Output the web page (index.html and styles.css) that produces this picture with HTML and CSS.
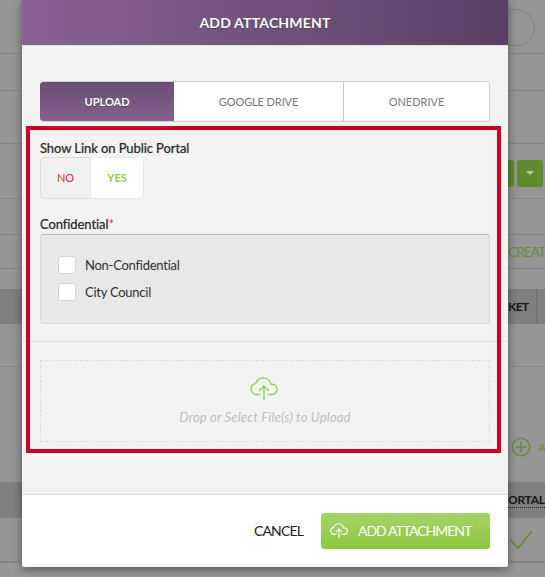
FILE: index.html
```html
<!DOCTYPE html>
<html lang="en">
<head>
<meta charset="utf-8">
<title>Add Attachment</title>
<link rel="stylesheet" href="styles.css">
</head>
<body>
<div class="page">
  <div class="bg-row bg-row-top"><span class="bg-pill"></span></div>
  <div class="bg-row bg-row-a"></div>
  <div class="bg-row bg-row-b"></div>
  <div class="bg-row bg-row-c"><span class="bg-btn"></span><span class="bg-btn bg-btn-caret"><i class="caret"></i></span><span class="bg-btn"></span></div>
  <div class="bg-row bg-row-d"></div>
  <div class="bg-row bg-row-e"><span class="bg-link">CREAT</span></div>
  <div class="bg-row bg-row-f"></div>
  <div class="bg-band bg-band-ket"><span class="bg-head">KET</span><span class="bg-head-rest"></span></div>
  <div class="bg-row bg-row-g"></div>
  <div class="bg-row bg-row-h">
    <svg class="bg-plus" viewBox="0 0 20 20" width="20" height="20"><circle cx="10" cy="10" r="8.8"/><path d="M10 4.5v11M4.500 10h11"/></svg>
    <span class="bg-link bg-link-a">A</span>
  </div>
  <div class="bg-band bg-band-portal"><span class="bg-head bg-head-dotted">ORTAL</span></div>
  <div class="bg-row bg-row-i">
    <svg class="bg-check" viewBox="0 0 24 20" width="24" height="20"><path d="M1.500 9.500l7.500 8.500L22.500 1.500"/></svg>
  </div>
  <div class="bg-row"></div>
</div>

<div class="modal">
  <header class="modal-header">ADD ATTACHMENT</header>
  <div class="modal-body">
    <div class="tabs">
      <button class="tab tab-active">UPLOAD</button>
      <button class="tab tab-drive">GOOGLE DRIVE</button>
      <button class="tab tab-one">ONEDRIVE</button>
    </div>
    <div class="field-label field-portal">Show Link on Public Portal</div>
    <div class="toggle">
      <span class="toggle-no">NO</span>
      <span class="toggle-yes">YES</span>
    </div>
    <div class="field-label field-conf">Confidential<span class="req">*</span></div>
    <div class="options">
      <label class="option"><span class="box"></span>Non-Confidential</label>
      <label class="option"><span class="box"></span>City Council</label>
    </div>
    <hr class="divider">
    <div class="dropzone">
      <svg class="cloud cloud-green" viewBox="0 0 28 23" width="28" height="23"><path d="M9.500 17.500H6.500C3.500 17.500 1 15 1 12c0-2.800 2-5 4.700-5.400C6.800 3.300 9.800 1 13.300 1c3.800 0 7 2.700 7.800 6.300.5-.1 1-.1 1.400 0 2.500.3 4.500 2.400 4.500 5 0 2.900-2.300 5.200-5 5.200h-3.500"/><path d="M14 23V9M9.500 13.500L14 9l4.500 4.500"/></svg>
      <div class="drop-text">Drop or Select File(s) to Upload</div>
    </div>
  </div>
  <footer class="modal-footer">
    <span class="cancel">CANCEL</span>
    <button class="primary">
      <svg class="cloud cloud-white" viewBox="0 0 28 23" width="18" height="15"><path d="M9.500 17.500H6.500C3.500 17.500 1 15 1 12c0-2.800 2-5 4.700-5.400C6.800 3.300 9.800 1 13.300 1c3.800 0 7 2.700 7.800 6.300.5-.1 1-.1 1.400 0 2.500.3 4.500 2.400 4.500 5 0 2.900-2.300 5.200-5 5.200h-3.500"/><path d="M14 23V9M9.500 13.500L14 9l4.500 4.500"/></svg>
      <span class="primary-label">ADD ATTACHMENT</span>
    </button>
  </footer>
  <div class="annotation"></div>
</div>
</body>
</html>
```

FILE: styles.css
```css
* { box-sizing: border-box; }
html, body { margin: 0; padding: 0; height: 100%; overflow: hidden; }
body { font-family: Lato, "Liberation Sans", sans-serif; background: #969696; color: #222; }

.page { height: 577px; overflow: hidden; position: relative; }
.bg-row { border-bottom: 1px solid #858585; display: flex; justify-content: flex-end; align-items: center; }
.bg-row-top { height: 54px; align-items: flex-start; }
.bg-pill { width: 46px; height: 37px; margin: 9px 10px 0 0; border: 1px solid #838383; border-left: 0; border-radius: 0 20px 20px 0; }
.bg-row-a { height: 37px; }
.bg-row-b { height: 53px; }
.bg-row-c { height: 55px; gap: 3px; justify-content: flex-start; padding: 4px 0 0 488px; }
.bg-btn { flex: none; width: 26px; height: 27px; background: #5f8a2d; border-radius: 3px; display: flex; align-items: center; justify-content: center; }
.caret { border: 4px solid transparent; border-top-color: #b5c6a0; border-bottom: 0; width: 0; height: 0; }
.bg-row-d { height: 36px; }
.bg-row-e { height: 34px; justify-content: flex-start; padding-left: 508px; }
.bg-link { color: #6c8c3c; font-size: 14px; letter-spacing: -1.200px; white-space: nowrap; }
.bg-row-f { height: 20px; border-bottom: 0; }
.bg-band { background: #7f7f7f; display: flex; align-items: center; font-size: 12px; font-weight: 700; color: #161616; }
.bg-band-ket { height: 35px; padding-left: 508px; letter-spacing: -.6px; }
.bg-head-rest { flex: none; height: 35px; margin-left: 7px; border-left: 1px solid #6f6f6f; }
.bg-row-g { height: 43px; }
.bg-row-h { height: 115px; border-bottom: 0; justify-content: flex-start; padding: 45px 0 0 511px; gap: 7px; }
.bg-plus { flex: none; fill: none; stroke: #6c8c3c; stroke-width: 1.5; }
.bg-link-a { font-size: 12px; letter-spacing: 0; }
.bg-band-portal { height: 36px; padding-left: 508px; }
.bg-head-dotted { border-bottom: 1px dotted #161616; line-height: 15px; letter-spacing: -.3px; }
.bg-row-i { height: 44px; justify-content: flex-start; padding-left: 509px; }
.bg-check { flex: none; fill: none; stroke: #5f8a2d; stroke-width: 1.500; }

.modal { position: absolute; left: 22px; top: 0; width: 486px; height: 567px; background: #f3f3f3; border-radius: 0 0 3px 3px; box-shadow: 0 2px 10px rgba(0,0,0,.45); display: flex; flex-direction: column; }
.modal-header { flex: none; height: 45px; background: linear-gradient(90deg, #8a6297, #5b4065); color: #fff; font-size: 14px; font-weight: 700; letter-spacing: .2px; text-align: center; line-height: 46px; text-shadow: 0 1px 1px rgba(0,0,0,.35); box-shadow: 0 1px 1px rgba(0,0,0,.06); }
.modal-body { flex: 1; padding: 36px 18px 0; display: flex; flex-direction: column; min-height: 0; }

.tabs { flex: none; height: 41px; display: flex; background: #fff; border: 1px solid #cfcfcf; border-left: 0; border-radius: 4px; overflow: hidden; }
.tab { font: 11px Lato, sans-serif; color: #777; background: #fff; border: 0; padding: 0; }
.tab-active { width: 134px; margin: -1px 0; background: linear-gradient(180deg, #694e74, #86608f); color: #fff; font-weight: 700; text-shadow: 0 1px 1px rgba(0,0,0,.3); }
.tab-drive { width: 170px; border-right: 1px solid #c8c8c8; letter-spacing: -.1px; }
.tab-one { flex: 1; }

.field-label { font-size: 13px; color: #222; -webkit-text-stroke: .2px #222; line-height: 16px; letter-spacing: -.08px; }
.field-portal { margin-top: 18px; }
.req { color: #c9344a; -webkit-text-stroke: 0; }
.toggle { flex: none; margin-top: 1px; width: 104px; height: 42px; display: flex; border-radius: 5px; font-size: 11px; font-weight: 700; line-height: 40px; text-align: center; }
.toggle-no { width: 50px; background: #f1f1f1; border: 1px solid #dcdcdc; border-right: 0; border-radius: 5px 0 0 5px; color: #d0283c; font-weight: 400; }
.toggle-yes { flex: 1; background: #fff; border: 1px solid #e9e9e9; border-radius: 0 5px 5px 0; color: #93cc48; }
.field-conf { margin-top: 17px; }
.options { flex: none; margin-top: 2px; height: 90px; background: #e8e8e8; border: 1px solid #d8d8d8; border-top-color: #b8b8b8; border-radius: 3px; padding: 21px 17px 0; display: flex; flex-direction: column; gap: 9px; }
.option { display: flex; align-items: center; height: 18px; font-size: 13px; color: #2e2e2e; letter-spacing: -.25px; }
.box { flex: none; width: 18px; height: 18px; background: #fff; border: 1px solid #d6d6d6; border-radius: 3px; margin-right: 9px; }
.divider { flex: none; border: 0; border-top: 1px solid #dedede; margin: 17px -18px 18px; }
.dropzone { flex: none; height: 82px; border: 1px dashed #dcdcdc; display: flex; flex-direction: column; align-items: center; padding-top: 16px; }
.cloud { fill: none; stroke-linecap: round; stroke-linejoin: round; display: block; flex: none; }
.cloud-green { stroke: #93cc55; stroke-width: 1.400; margin-right: 2px; }
.cloud-white { stroke: #fff; stroke-width: 1.800; }
.drop-text { margin-top: 8px; font-size: 13px; font-style: italic; color: #bdbdbd; line-height: 18px; letter-spacing: .17px; }

.modal-footer { flex: none; height: 73px; background: #fff; border-top: 1px solid #dedede; border-radius: 0 0 3px 3px; display: flex; justify-content: flex-end; align-items: flex-start; padding: 18px 18px 0 0; }
.cancel { font-size: 14px; color: #222; line-height: 35px; margin-right: 18px; letter-spacing: -.85px; }
.primary { width: 169px; height: 36px; border: 0; border-radius: 3px; background: linear-gradient(180deg, #a6d468, #8cc63f); color: #fff; font: 14px Lato, sans-serif; display: flex; align-items: center; padding: 0 0 1px 9px; gap: 10px; }
.primary-label { letter-spacing: -1px; }

.annotation { position: absolute; left: 4px; top: 126px; width: 475px; height: 327px; border: 4px solid #cf0022; pointer-events: none; }
```
